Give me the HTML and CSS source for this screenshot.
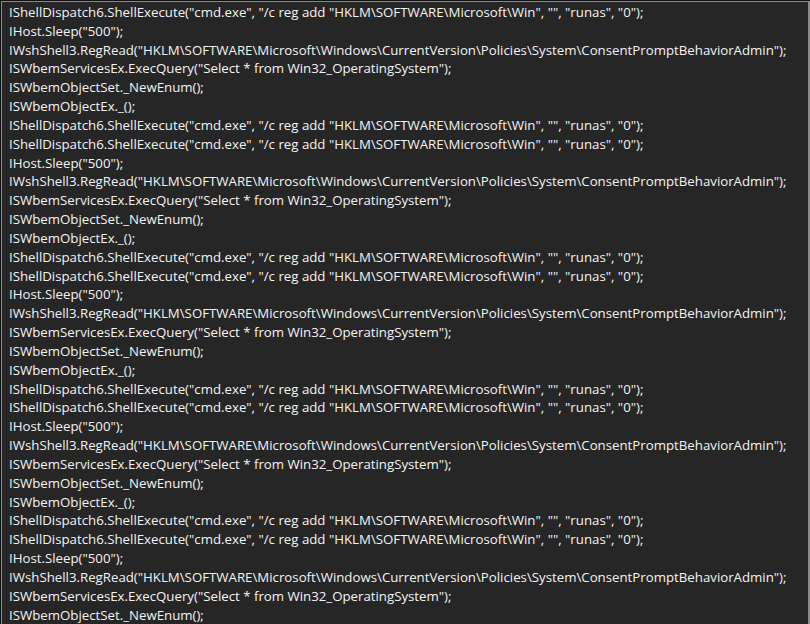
FILE: index.html
```html
<!DOCTYPE html>
<html>
<head>
<meta charset="utf-8">
<link rel="stylesheet" href="styles.css">
</head>
<body>
<div class="frame">
<div class="code">
<div class="ln">IShellDispatch6.ShellExecute("cmd.exe", "/c reg add "HKLM\SOFTWARE\Microsoft\Win", "", "runas", "0");</div>
<div class="ln">IHost.Sleep("500");</div>
<div class="ln">IWshShell3.RegRead("HKLM\SOFTWARE\Microsoft\Windows\CurrentVersion\Policies\System\ConsentPromptBehaviorAdmin");</div>
<div class="ln">ISWbemServicesEx.ExecQuery("Select * from Win32_OperatingSystem");</div>
<div class="ln">ISWbemObjectSet._NewEnum();</div>
<div class="ln">ISWbemObjectEx._();</div>
<div class="ln">IShellDispatch6.ShellExecute("cmd.exe", "/c reg add "HKLM\SOFTWARE\Microsoft\Win", "", "runas", "0");</div>
<div class="ln">IShellDispatch6.ShellExecute("cmd.exe", "/c reg add "HKLM\SOFTWARE\Microsoft\Win", "", "runas", "0");</div>
<div class="ln">IHost.Sleep("500");</div>
<div class="ln">IWshShell3.RegRead("HKLM\SOFTWARE\Microsoft\Windows\CurrentVersion\Policies\System\ConsentPromptBehaviorAdmin");</div>
<div class="ln">ISWbemServicesEx.ExecQuery("Select * from Win32_OperatingSystem");</div>
<div class="ln">ISWbemObjectSet._NewEnum();</div>
<div class="ln">ISWbemObjectEx._();</div>
<div class="ln">IShellDispatch6.ShellExecute("cmd.exe", "/c reg add "HKLM\SOFTWARE\Microsoft\Win", "", "runas", "0");</div>
<div class="ln">IShellDispatch6.ShellExecute("cmd.exe", "/c reg add "HKLM\SOFTWARE\Microsoft\Win", "", "runas", "0");</div>
<div class="ln">IHost.Sleep("500");</div>
<div class="ln">IWshShell3.RegRead("HKLM\SOFTWARE\Microsoft\Windows\CurrentVersion\Policies\System\ConsentPromptBehaviorAdmin");</div>
<div class="ln">ISWbemServicesEx.ExecQuery("Select * from Win32_OperatingSystem");</div>
<div class="ln">ISWbemObjectSet._NewEnum();</div>
<div class="ln">ISWbemObjectEx._();</div>
<div class="ln">IShellDispatch6.ShellExecute("cmd.exe", "/c reg add "HKLM\SOFTWARE\Microsoft\Win", "", "runas", "0");</div>
<div class="ln">IShellDispatch6.ShellExecute("cmd.exe", "/c reg add "HKLM\SOFTWARE\Microsoft\Win", "", "runas", "0");</div>
<div class="ln">IHost.Sleep("500");</div>
<div class="ln">IWshShell3.RegRead("HKLM\SOFTWARE\Microsoft\Windows\CurrentVersion\Policies\System\ConsentPromptBehaviorAdmin");</div>
<div class="ln">ISWbemServicesEx.ExecQuery("Select * from Win32_OperatingSystem");</div>
<div class="ln">ISWbemObjectSet._NewEnum();</div>
<div class="ln">ISWbemObjectEx._();</div>
<div class="ln">IShellDispatch6.ShellExecute("cmd.exe", "/c reg add "HKLM\SOFTWARE\Microsoft\Win", "", "runas", "0");</div>
<div class="ln">IShellDispatch6.ShellExecute("cmd.exe", "/c reg add "HKLM\SOFTWARE\Microsoft\Win", "", "runas", "0");</div>
<div class="ln">IHost.Sleep("500");</div>
<div class="ln">IWshShell3.RegRead("HKLM\SOFTWARE\Microsoft\Windows\CurrentVersion\Policies\System\ConsentPromptBehaviorAdmin");</div>
<div class="ln">ISWbemServicesEx.ExecQuery("Select * from Win32_OperatingSystem");</div>
<div class="ln">ISWbemObjectSet._NewEnum();</div>
</div>
</div>
</body>
</html>
```

FILE: styles.css
```css
html, body {
  margin: 0;
  padding: 0;
  background: #111;
  width: 810px;
  height: 624px;
  overflow: hidden;
}
.frame {
  margin: 1px 0 0 1px;
  width: 809px;
  height: 623px;
  box-sizing: border-box;
  background: #262626;
  border: 1px solid #8a8a8a;
  border-bottom: none;
  border-right-width: 2px;
  overflow: hidden;
}
.code {
  padding: 1px 0 0 7px;
  font-family: "Open Sans", sans-serif;
  font-size: 13.25px;
  line-height: 18.84px;
  color: #f4f4f4;
}
.ln {
  white-space: pre;
  height: 18.84px;
}
```
